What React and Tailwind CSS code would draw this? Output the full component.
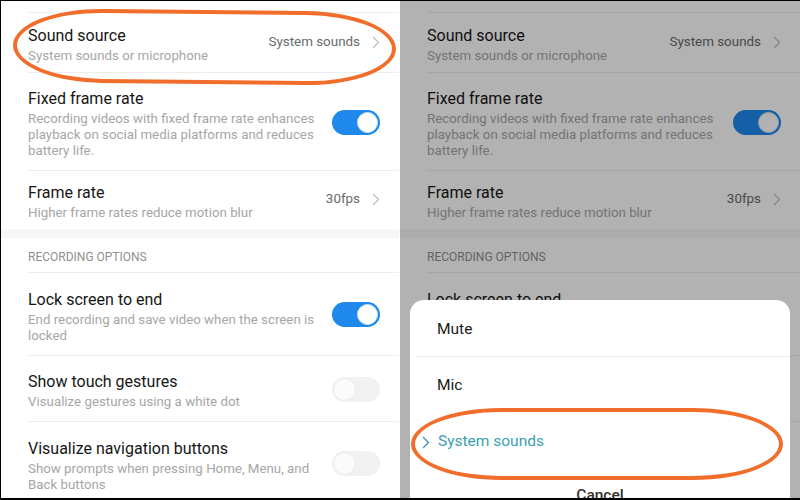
import React from "react";

const font = { fontFamily: "Roboto, 'Noto Sans', Arial, sans-serif" };

function Chevron({ color = "#bdbdbd" }) {
  return (
    <svg width="8" height="13" viewBox="0 0 8 13" fill="none">
      <path d="M1.5 1.5 L6.5 6.5 L1.5 11.5" stroke={color} strokeWidth="1.3" strokeLinecap="round" strokeLinejoin="round" />
    </svg>
  );
}

function Toggle({ on }) {
  if (on) {
    return (
      <div className="w-[48px] h-[25px] rounded-full bg-[#1e88ec] flex items-center justify-end pr-[2px] shrink-0">
        <div className="w-[21px] h-[21px] rounded-full bg-white border border-[#cfe4fa]" />
      </div>
    );
  }
  return (
    <div className="w-[48px] h-[25px] rounded-full bg-[#f1f1f1] flex items-center justify-start pl-[2px] shrink-0">
      <div className="w-[21px] h-[21px] rounded-full bg-[#fbfbfb] shadow-[0_0_2px_rgba(0,0,0,0.08)]" />
    </div>
  );
}

function Row({ h, title, lines, value, toggle, sep = true }) {
  return (
    <div className={`relative flex items-center pl-[27px] pr-[19px] ${h}`}>
      <div className="flex-1 flex flex-col pt-[3px]">
        <div className="text-[16px] leading-[22px] text-[#161616]">{title}</div>
        <div className="text-[13.3px] leading-[16px] text-[#a6a6a6] mt-[1px]">
          {lines.map((l, i) => (
            <div key={i}>{l}</div>
          ))}
        </div>
      </div>
      {value && (
        <div className="flex items-center gap-[12px] pb-[1px]">
          <span className="text-[13.4px] text-[#6a6a6a]">{value}</span>
          <Chevron />
        </div>
      )}
      {toggle !== undefined && <Toggle on={toggle} />}
      {sep && <div className="absolute left-[27px] right-0 bottom-0 h-px bg-[#eeeeee]" />}
    </div>
  );
}

function SettingsList() {
  return (
    <div className="flex flex-col bg-white w-full h-full overflow-hidden">
      <div className="h-[12px] relative shrink-0">
        <div className="absolute left-[27px] right-0 bottom-0 h-px bg-[#eeeeee]" />
      </div>
      <Row h="h-[60px] shrink-0" title="Sound source" lines={["System sounds or microphone"]} value="System sounds" />
      <Row
        h="h-[98px] shrink-0"
        title="Fixed frame rate"
        lines={["Recording videos with fixed frame rate enhances", "playback on social media platforms and reduces", "battery life."]}
        toggle={true}
      />
      <Row h="h-[58px] shrink-0" title="Frame rate" lines={["Higher frame rates reduce motion blur"]} value="30fps" sep={false} />
      <div className="h-[9px] bg-[#f6f6f6] shrink-0" />
      <div className="relative h-[35px] pl-[27px] pt-[11px] shrink-0">
        <div className="text-[12px] leading-[16px] text-[#8f8f8f]">RECORDING OPTIONS</div>
        <div className="absolute left-[27px] right-0 bottom-0 h-px bg-[#eeeeee]" />
      </div>
      <Row
        h="h-[83px] shrink-0"
        title="Lock screen to end"
        lines={["End recording and save video when the screen is", "locked"]}
        toggle={true}
      />
      <Row h="h-[66px] shrink-0" title="Show touch gestures" lines={["Visualize gestures using a white dot"]} toggle={false} />
      <Row
        h="h-[83px] shrink-0"
        title="Visualize navigation buttons"
        lines={["Show prompts when pressing Home, Menu, and", "Back buttons"]}
        toggle={false}
        sep={false}
      />
    </div>
  );
}

export default function App() {
  return (
    <div style={font} className="w-[800px] h-[500px] bg-black flex pt-px pl-px pb-[2px] overflow-hidden">
      <div className="relative w-[398px] h-full bg-white overflow-hidden">
        <SettingsList />
        <div className="absolute left-[12px] top-[9px] w-[383px] h-[74px] border-[4px] border-[#f06d2c] rounded-[90px/37px] rotate-[0.6deg]" />
      </div>
      <div className="w-px h-full bg-white" />
      <div className="relative flex-1 h-full overflow-hidden">
        <SettingsList />
        <div className="absolute inset-0 bg-black/30" />
        <div className="absolute left-[10px] right-[10px] top-[299px] bottom-[-40px] bg-white rounded-[14px] flex flex-col">
          <div className="relative h-[57px] flex items-center pl-[27px] pt-[3px] text-[15.5px] text-[#1a1a1a]">
            Mute
            <div className="absolute left-[6px] right-0 bottom-0 h-px bg-[#eeeeee]" />
          </div>
          <div className="h-[56px] flex items-center pl-[27px] pt-[2px] text-[15.5px] text-[#1a1a1a]">Mic</div>
          <div className="h-[56px] flex items-center pl-[12px] pt-[2px] gap-[8px] text-[15.5px] text-[#3a9fb0]">
            <Chevron color="#3b8fc0" />
            <span>System sounds</span>
          </div>
          <div className="h-[50px] flex items-center justify-center text-[15.5px] text-[#333333] font-medium pt-[4px]">Cancel</div>
        </div>
        <div className="absolute left-[11px] top-[407px] w-[372px] h-[72px] border-[4px] border-[#f06d2c] rounded-[90px/36px]" />
      </div>
    </div>
  );
}
